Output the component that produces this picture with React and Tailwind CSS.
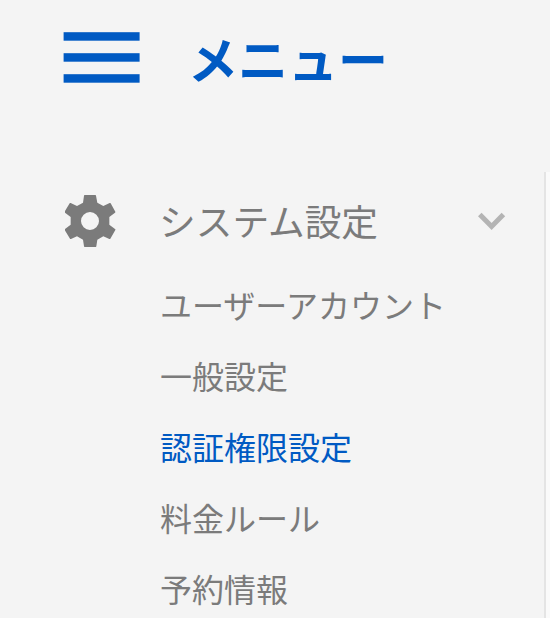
const items = [
  { label: "ユーザーアカウント" },
  { label: "一般設定" },
  { label: "認証権限設定", active: true },
  { label: "料金ルール" },
  { label: "予約情報" },
];

function BurgerIcon() {
  return (
    <svg viewBox="0 0 77 52" className="h-[52px] w-[77px] fill-current" aria-hidden="true">
      <rect x="0.6" y="0.2" width="76" height="8.5" />
      <rect x="0.6" y="21.2" width="76" height="8.5" />
      <rect x="0.6" y="42.2" width="76" height="8.5" />
    </svg>
  );
}

function GearIcon() {
  return (
    <svg viewBox="45 45 153 159" className="mt-0.5 ml-px h-[53px] w-[51px] shrink-0 fill-current" aria-hidden="true">
      <path
        fillRule="evenodd"
        d="M104 45h32q2 0 2 2l4 21 18 10 19-9q2-1 3 1l14 25q1 2-1 3l-17 13v23l17 13q2 1 1 3l-15 26q-1 2-3 1l-18-8-18 10-3 20q0 2-2 2h-33q-2 0-2-2l-3-20-18-10-18 8q-2 1-3-1l-16-26q-1-2 1-3l17-13v-23l-17-13q-2-1-1-3l15-25q1-2 3-1l19 9 18-10 3-21q0-2 2-2zM120 96a27 27 0 1 0 0 54 27 27 0 1 0 0-54z"
      />
    </svg>
  );
}

function ChevronIcon() {
  return (
    <svg viewBox="0 0 28 18" className="h-[18px] w-7 fill-none stroke-[#b4b4b4] stroke-[5]" aria-hidden="true">
      <path d="M1.8 2.6l11.8 11.8L25.4 2.6" />
    </svg>
  );
}

export default function App() {
  return (
    <div className="flex h-[618px] w-[550px] flex-col overflow-hidden bg-[#f4f4f4] font-['Noto_Sans_CJK_JP',sans-serif] text-[#7b7b7b]">
      <header className="flex h-[172px] shrink-0 items-start pl-[63px] text-[#005ac3]">
        <button type="button" aria-label="メニュー" className="mt-8">
          <BurgerIcon />
        </button>
        <h1 className="mt-[27px] ml-12 text-[50px] leading-[60px] font-bold">メニュー</h1>
      </header>

      <div className="flex grow">
        <nav className="w-[544px] shrink-0 pl-16 whitespace-nowrap">
          <div className="flex h-[97px] items-center pr-[38px]">
            <GearIcon />
            <span className="mt-px ml-[43px] grow text-[36.7px]">システム設定</span>
            <ChevronIcon />
          </div>
          <ul className="pl-24 text-[32px]">
            {items.map(({ label, active }) => (
              <li key={label} className={active ? "h-[71px] leading-[71px] text-[#005ac3]" : "h-[71px] leading-[71px]"}>
                {label}
              </li>
            ))}
          </ul>
        </nav>
        <div className="grow border-l-2 border-[#e4e4e4] bg-[#fafafa]" />
      </div>
    </div>
  );
}
